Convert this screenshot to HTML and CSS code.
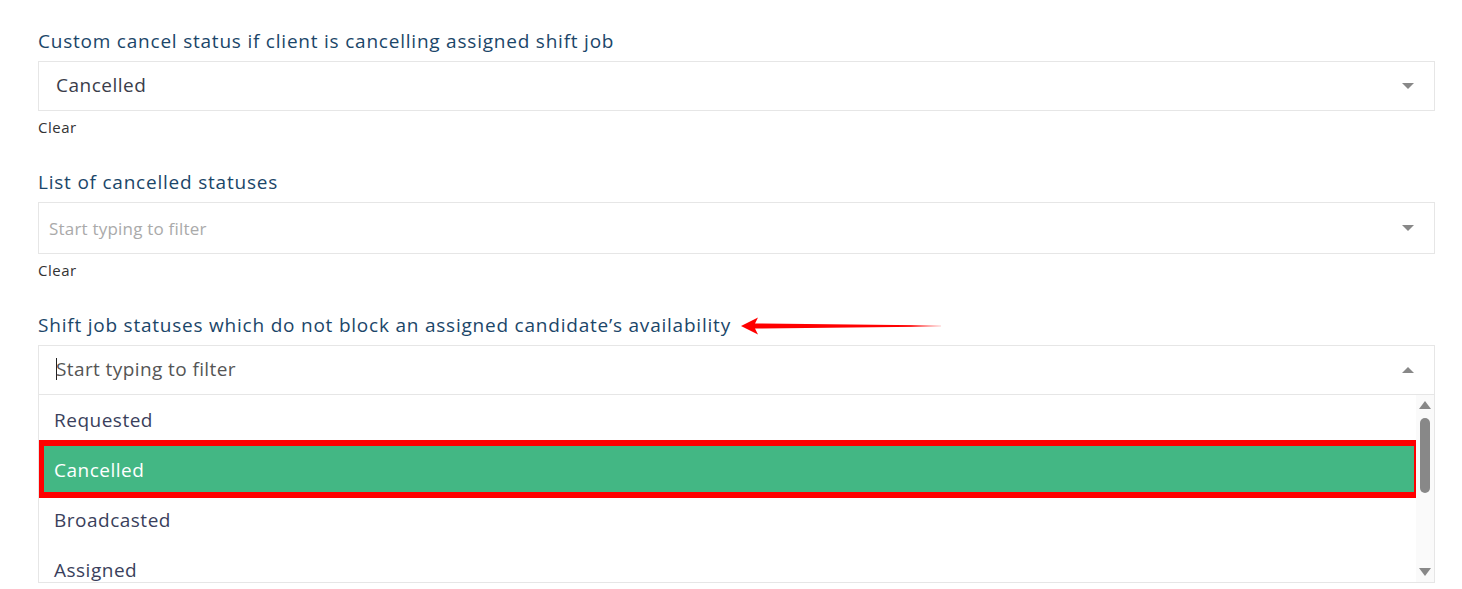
FILE: index.html
```html
<!DOCTYPE html>
<html>
<head>
<meta charset="utf-8">
<link rel="stylesheet" href="styles.css">
</head>
<body>
<div class="page">
  <div class="field">
    <div class="label">Custom cancel status if client is cancelling assigned shift job</div>
    <div class="select">
      <span class="value">Cancelled</span>
      <span class="caret down"></span>
    </div>
    <div class="clear">Clear</div>
  </div>

  <div class="field">
    <div class="label">List of cancelled statuses</div>
    <div class="select tall">
      <span class="placeholder">Start typing to filter</span>
      <span class="caret down"></span>
    </div>
    <div class="clear">Clear</div>
  </div>

  <div class="field last">
    <div class="label-row">
      <div class="label">Shift job statuses which do not block an assigned candidate’s availability</div>
      <svg class="arrow" width="200" height="20" viewBox="0 0 200 20">
        <defs>
          <linearGradient id="fade" x1="0" x2="1" y1="0" y2="0">
            <stop offset="0" stop-color="#ff0000"/>
            <stop offset="0.85" stop-color="#ff0000"/>
            <stop offset="1" stop-color="#ff0000" stop-opacity="0.2"/>
          </linearGradient>
        </defs>
        <polygon points="0,10 17,1.5 14,7.5 200,9.5 200,10.5 14,12.5 17,18.5" fill="url(#fade)"/>
      </svg>
    </div>
    <div class="select open">
      <span class="typing"><span class="cursor"></span>Start typing to filter</span>
      <span class="caret up"></span>
    </div>
    <div class="menu">
      <div class="options">
        <div class="option">Requested</div>
        <div class="option active">Cancelled</div>
        <div class="option">Broadcasted</div>
        <div class="option">Assigned</div>
        <div class="highlight"></div>
      </div>
      <div class="scrollbar">
        <span class="sb-arrow sb-up"></span>
        <span class="thumb"></span>
        <span class="sb-arrow sb-down"></span>
      </div>
    </div>
  </div>
</div>
</body>
</html>
```

FILE: styles.css
```css
* { box-sizing: border-box; }
html, body { margin: 0; padding: 0; background: #ffffff; }
body {
  font-family: "Open Sans", "Lato", sans-serif;
  color: #333;
  height: 589px;
  overflow: hidden;
}
.page {
  padding: 30px 27px 0 38px;
  width: 1462px;
}
.field { margin-bottom: 35px; }
.field.last { margin-bottom: 0; }
.label {
  font-size: 19px;
  line-height: 22px;
  color: #1b4669;
  font-weight: 500;
  letter-spacing: 0.78px;
}
.label-row {
  display: flex;
  align-items: center;
}
.arrow { margin-left: 10px; margin-top: 2px; }
.select {
  margin-top: 9px;
  height: 50px;
  border: 1px solid #e6e6e6;
  display: flex;
  align-items: center;
  justify-content: space-between;
  padding: 0 20px 0 17px;
  font-size: 19px;
  background: #fff;
}
.select.tall { height: 52px; padding-left: 10px; }
.value { color: #3a3d4a; margin-top: -3px; letter-spacing: 0.5px; }
.placeholder { color: #aaaaaa; font-size: 17px; letter-spacing: 0.2px; }
.typing {
  color: #555;
  display: flex;
  align-items: center;
  margin-top: -2px;
  letter-spacing: 0.4px;
}
.cursor {
  display: inline-block;
  width: 1px;
  height: 22px;
  background: #222;
  margin-right: -1px;
}
.caret {
  width: 0; height: 0;
  border-left: 6px solid transparent;
  border-right: 6px solid transparent;
}
.caret.down { border-top: 6px solid #888; }
.caret.up { border-bottom: 6px solid #888; }
.clear {
  margin-top: 7px;
  font-size: 15px;
  line-height: 18px;
  letter-spacing: 0.5px;
  color: #333;
}
.menu {
  display: flex;
  border: 1px solid #e6e6e6;
  border-top: none;
  height: 188px;
  overflow: hidden;
}
.options {
  flex: 1;
  position: relative;
}
.option {
  height: 50px;
  display: flex;
  align-items: center;
  padding-left: 15px;
  font-size: 19px;
  letter-spacing: 0.5px;
  color: #3a3f5c;
}
.option.active {
  background: #43b784;
  color: #ffffff;
}
.highlight {
  position: absolute;
  left: -1px;
  top: 45px;
  width: 1382px;
  height: 58px;
  border: 6px solid #ff0000;
  pointer-events: none;
}
.scrollbar {
  width: 18px;
  background: #fafafa;
  position: relative;
}
.sb-arrow {
  width: 0; height: 0;
  border-left: 6px solid transparent;
  border-right: 6px solid transparent;
  position: absolute;
  left: 3px;
}
.sb-up { top: 6px; border-bottom: 8px solid #888; }
.sb-down { bottom: 6px; border-top: 8px solid #888; }
.thumb {
  position: absolute;
  top: 23px;
  left: 4px;
  width: 10px;
  height: 75px;
  border-radius: 5px;
  background: #888;
}
```
